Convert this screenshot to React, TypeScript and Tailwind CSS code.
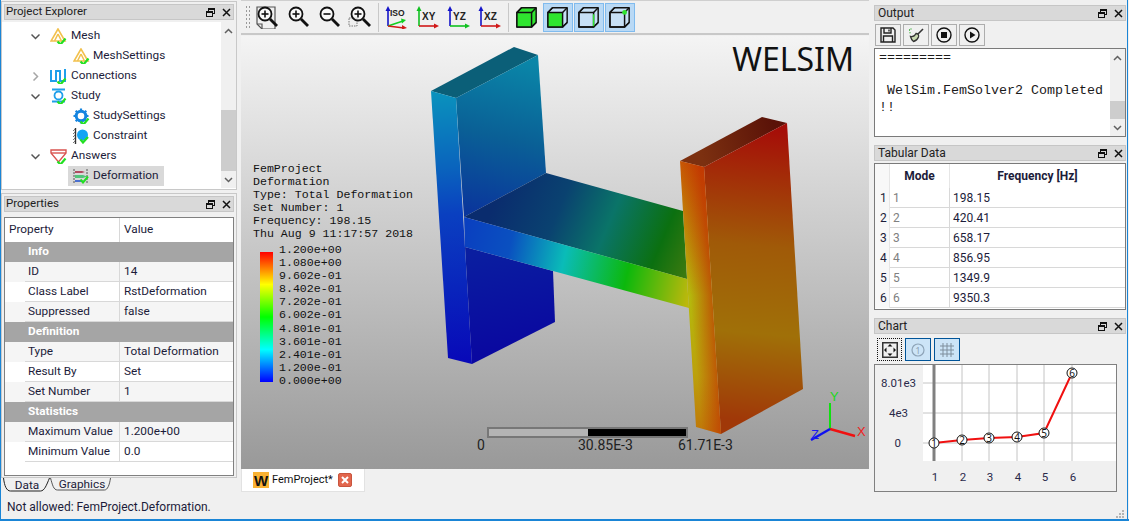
import React from "react";

const uiFont = "font-['Roboto','Noto_Sans',sans-serif]";

function FloatClose() {
  return (
    <div className="flex items-center gap-[7px] pr-[2px]">
      <svg width="9" height="9" viewBox="0 0 9 9" fill="none" stroke="#111" strokeWidth="1">
        <rect x="2.5" y="0.5" width="6" height="5" />
        <path d="M2.5 1.5h6" />
        <rect x="0.5" y="3.5" width="6" height="5" fill="#d9d9d9" />
        <path d="M0.5 4.5h6" />
      </svg>
      <svg width="9" height="9" viewBox="0 0 9 9" fill="none" stroke="#111" strokeWidth="1.5">
        <path d="M1 1l7 7M8 1l-7 7" />
      </svg>
    </div>
  );
}

function TitleBar({ text, right }: { text: string; right?: boolean }) {
  return (
    <div className={"h-[16px] shrink-0 bg-[#d9d9d9] border border-[#c6c6c6] flex items-center justify-between text-[#222] leading-none " + (right ? "pl-[3px] text-[12px]" : "pl-[1px] text-[11.5px]")}>
      <span>{text}</span>
      <FloatClose />
    </div>
  );
}

function Check() {
  return (
    <path d="M7.5 13.5l3 3 5-6" fill="none" stroke="#22e022" strokeWidth="2.2" />
  );
}

function MeshIcon() {
  return (
    <svg width="17" height="16" viewBox="0 0 17 16" fill="none" stroke="#f2c14e" strokeWidth="1.6">
      <path d="M8 1L1 13h14z" />
      <path d="M8 6l-3.5 7M8 6l3.5 7" />
      <Check />
    </svg>
  );
}

function ConnectionsIcon() {
  return (
    <svg width="17" height="16" viewBox="0 0 17 16" fill="none" stroke="#1f9fea" strokeWidth="2">
      <path d="M1 2v11h5V3h4v10h5V1" />
      <Check />
    </svg>
  );
}

function StudyIcon() {
  return (
    <svg width="17" height="16" viewBox="0 0 17 16" fill="none" stroke="#1f9fea" strokeWidth="1.8">
      <path d="M2 1.5h13M2 13.5h13" />
      <circle cx="8.5" cy="7.5" r="4" />
      <Check />
    </svg>
  );
}

function GearIcon() {
  return (
    <svg width="17" height="16" viewBox="0 0 17 16" fill="none">
      <circle cx="8" cy="8" r="4.8" stroke="#1585e0" strokeWidth="3" />
      <path d="M8 0.5v3M8 12.5v3M0.5 8h3M12.5 8h3M2.7 2.7l2 2M11.3 11.3l2 2M13.3 2.7l-2 2M4.7 11.3l-2 2" stroke="#1585e0" strokeWidth="2.2" />
      <Check />
    </svg>
  );
}

function ConstraintIcon() {
  return (
    <svg width="17" height="16" viewBox="0 0 17 16" fill="none">
      <path d="M2.5 0v16" stroke="#333" strokeWidth="1.4" />
      <path d="M0 3l2-2M0 6l2-2M0 9l2-2M0 12l2-2M0 15l2-2" stroke="#777" />
      <circle cx="9.5" cy="7" r="5.5" fill="#12a4f4" />
      <path d="M7.5 11.5l2.5 3 5-5.5" stroke="#22e022" strokeWidth="2.2" />
    </svg>
  );
}

function AnswersIcon() {
  return (
    <svg width="17" height="16" viewBox="0 0 17 16" fill="none" stroke="#d9534f" strokeWidth="1.4">
      <path d="M1 2h15v3l-7.5 9L1 5z" />
      <path d="M1 5h15" />
      <Check />
    </svg>
  );
}

function DeformationIcon() {
  return (
    <svg width="17" height="16" viewBox="0 0 17 16" fill="none">
      <path d="M1 1v14M14 1v14" stroke="#555" strokeDasharray="2 1" />
      <path d="M2 3h7l3 1-3 1H2z" fill="#b04a60" />
      <path d="M2 7h8l4 1.5L10 10H2z" fill="#52c47a" />
      <path d="M2 12h6l3 1-3 1H2z" fill="#4a6fd0" />
      <path d="M7.5 11.5l2.5 3 5-6" stroke="#22e022" strokeWidth="2" />
    </svg>
  );
}

function Chevron({ open }: { open: boolean }) {
  return (
    <svg width="9" height="9" viewBox="0 0 9 9" fill="none" strokeWidth="1.5" stroke={open ? "#555" : "#a6a6a6"}>
      {open ? <path d="M0.5 2.5l4 4 4-4" /> : <path d="M2.5 0.5l4 4-4 4" />}
    </svg>
  );
}

const treeRows = [
  { label: "Mesh", depth: 0, open: true, icon: <MeshIcon /> },
  { label: "MeshSettings", depth: 1, icon: <MeshIcon /> },
  { label: "Connections", depth: 0, open: false, icon: <ConnectionsIcon /> },
  { label: "Study", depth: 0, open: true, icon: <StudyIcon /> },
  { label: "StudySettings", depth: 1, icon: <GearIcon /> },
  { label: "Constraint", depth: 1, icon: <ConstraintIcon /> },
  { label: "Answers", depth: 0, open: true, icon: <AnswersIcon /> },
  { label: "Deformation", depth: 1, icon: <DeformationIcon />, selected: true },
];

function ScrollBar({ thumbTop, thumbH, h }: { thumbTop: number; thumbH: number; h: number }) {
  return (
    <div className="w-[15px] shrink-0 bg-[#f0f0f0] flex flex-col items-center" style={{ height: h }}>
      <div className="h-[17px] flex items-center justify-center shrink-0">
        <svg width="9" height="6" viewBox="0 0 9 6" fill="none" stroke="#606060" strokeWidth="1.5">
          <path d="M1 5l3.5-3.5L8 5" />
        </svg>
      </div>
      <div className="flex-1 w-full relative">
        <div className="absolute left-0 right-0 bg-[#cdcdcd]" style={{ top: thumbTop, height: thumbH }} />
      </div>
      <div className="h-[17px] flex items-center justify-center shrink-0">
        <svg width="9" height="6" viewBox="0 0 9 6" fill="none" stroke="#606060" strokeWidth="1.5">
          <path d="M1 1l3.5 3.5L8 1" />
        </svg>
      </div>
    </div>
  );
}

function ProjectExplorer() {
  return (
    <div className="h-[189px] border border-[#c8c8c8] px-[2px] pt-[2px] flex flex-col">
      <TitleBar text="Project Explorer" />
      <div className="mt-[2px] flex-1 bg-white -mx-[2px] flex min-h-0 overflow-hidden">
        <div className="flex-1 pt-[4px]">
          {treeRows.map((r) => (
            <div key={r.label} className="h-[20px] flex items-center text-[11.8px] text-[#1c1c3a]">
              {r.depth === 0 ? (
                <>
                  <div className="w-[48px] pl-[29px] flex items-center">
                    <Chevron open={!!r.open} />
                  </div>
                  <div className="w-[21px]">{r.icon}</div>
                  <span>{r.label}</span>
                </>
              ) : (
                <>
                  <div className={"ml-[66px] h-[20px] flex items-center pl-[5px] pr-[5px] " + (r.selected ? "bg-[#d9d9d9]" : "")}>
                    <div className="w-[20px]">{r.icon}</div>
                    <span>{r.label}</span>
                  </div>
                </>
              )}
            </div>
          ))}
        </div>
        <ScrollBar h={166} thumbTop={71} thumbH={61} />
      </div>
    </div>
  );
}

const propRows: { k: string; v?: string; cat?: boolean; alt?: boolean }[] = [
  { k: "Info", cat: true },
  { k: "ID", v: "14", alt: true },
  { k: "Class Label", v: "RstDeformation" },
  { k: "Suppressed", v: "false", alt: true },
  { k: "Definition", cat: true },
  { k: "Type", v: "Total Deformation", alt: true },
  { k: "Result By", v: "Set" },
  { k: "Set Number", v: "1", alt: true },
  { k: "Statistics", cat: true },
  { k: "Maximum Value", v: "1.200e+00", alt: true },
  { k: "Minimum Value", v: "0.0" },
];

function Properties() {
  return (
    <div className="mt-[3px] h-[285px] border border-[#c8c8c8] px-[2px] pt-[2px] flex flex-col">
      <TitleBar text="Properties" />
      <div className="mt-[5px] h-[259px] w-[230px] border border-[#808080] bg-white text-[11.8px] text-[#1c1c3a] overflow-hidden">
        <div className="h-[24px] flex items-center">
          <div className="w-[115px] h-full pl-[4px] flex items-center border-r border-[#d8d8d8]">Property</div>
          <div className="pl-[4px]">Value</div>
        </div>
        {propRows.map((r) =>
          r.cat ? (
            <div key={r.k} className="h-[20px] bg-[#a5a5a5] text-white font-bold pl-[23px] flex items-center">
              {r.k}
            </div>
          ) : (
            <div key={r.k} className={"h-[20px] flex " + (r.alt ? "bg-[#f5f5f5]" : "bg-white")}>
              <div className="w-[20px] shrink-0" />
              <div className="w-[95px] shrink-0 pl-[3px] border-b border-r border-[#d8d8d8] flex items-center whitespace-nowrap">{r.k}</div>
              <div className="flex-1 pl-[4px] border-b border-[#d8d8d8] flex items-center">{r.v}</div>
            </div>
          )
        )}
      </div>
    </div>
  );
}

function BottomTabs() {
  return (
    <div className="flex pl-[2px] text-[11.8px] text-[#1c1c3a] leading-none">
      <div className="relative w-[48px] h-[15px] flex items-center justify-center">
        <svg className="absolute inset-0" width="48" height="15" viewBox="0 0 48 15" fill="#f0f0f0" stroke="#222">
          <path d="M0.5 0c1 8 3 13 7 13h30c4 0 6-6 9-13" />
        </svg>
        <span className="relative">Data</span>
      </div>
      <div className="relative w-[64px] h-[15px] -ml-[1px] flex items-center justify-center">
        <svg className="absolute inset-0" width="64" height="15" viewBox="0 0 64 15" fill="#f0f0f0" stroke="#555">
          <path d="M0.5 0c2 7 3 12 7 12h47c3 0 5-5 6-12" />
        </svg>
        <span className="relative -mt-[2px]">Graphics</span>
      </div>
    </div>
  );
}

function Magnifier({ sign, children }: { sign: "+" | "-"; children?: React.ReactNode }) {
  return (
    <svg width="24" height="24" viewBox="0 0 24 24" fill="none" stroke="#111">
      {children}
      <circle cx="10" cy="9" r="6.5" strokeWidth="1.8" fill="#fff" fillOpacity="0.6" />
      <path d="M6.5 9h7" strokeWidth="1.6" />
      {sign === "+" && <path d="M10 5.5v7" strokeWidth="1.6" />}
      <path d="M15 14l7 7" strokeWidth="2.8" />
    </svg>
  );
}

function AxisIcon({ label, up, right, third }: { label: string; up: string; right: string; third?: string }) {
  return (
    <svg width="24" height="24" viewBox="0 0 24 24" fill="none" strokeWidth="1.6">
      <path d="M3 21V4" stroke={up} />
      <path d="M0.5 6L3 1l2.5 5z" fill={up} stroke="none" />
      {third ? (
        <>
          <path d="M3 21l15-5" stroke="#10d020" />
          <path d="M16 13.5l5 1.5-4 3.5z" fill="#10d020" stroke="none" />
          <path d="M3 21l16 2" stroke="#d01818" />
          <path d="M17 20l5 3-5 1.5z" fill="#d01818" stroke="none" />
        </>
      ) : (
        <>
          <path d="M3 21h16" stroke={right} />
          <path d="M18 18.5l5 2.5-5 2.5z" fill={right} stroke="none" />
        </>
      )}
      <text x={third ? 5 : 6} y={third ? 11 : 15} fontFamily="'Liberation Sans',sans-serif" fontWeight="bold" fontSize={third ? 8.5 : 10} fill="#222" stroke="none">
        {label}
      </text>
    </svg>
  );
}

function Cube({ variant }: { variant: "solid" | "front" | "right" | "corner" }) {
  return (
    <svg width="22" height="22" viewBox="0 0 24 24" fill="none" stroke="#111" strokeWidth="1.6" strokeLinejoin="round">
      <path d="M6 2h16v16l-5 5H1V7z" fill={variant === "solid" ? "#2fe52f" : "#dcebf8"} fillOpacity={variant === "solid" ? 1 : 0.4} />
      <rect x="1" y="7" width="16" height="16" fill={variant === "front" || variant === "solid" ? "#2fe52f" : "none"} />
      <path d="M1 7l5-5M17 7l5-5M17 23l5-5" />
      {variant === "right" && <path d="M17 9v13" stroke="#2fe52f" strokeWidth="1.6" />}
      {variant === "corner" && <circle cx="17" cy="7" r="2.6" fill="#2fe52f" stroke="none" />}
    </svg>
  );
}

function ToolBtn({ active, children }: { active?: boolean; children: React.ReactNode }) {
  return (
    <div className={"w-[30px] h-[29px] flex items-center justify-center shrink-0 border " + (active ? "bg-[#b9d9f5] border-[#80bbee]" : "border-transparent")}>
      {children}
    </div>
  );
}

function Toolbar() {
  return (
    <div className="h-[35px] shrink-0 border-t border-b-2 border-t-[#cfcfcf] border-b-[#c8c8c8] flex items-center pl-[4px] gap-[1px]">
      <div className="w-[5px] h-[24px] mr-[1px] bg-[radial-gradient(#9a9a9a_0.7px,transparent_0.9px)] bg-[length:3px_4px]" />
      <ToolBtn>
        <Magnifier sign="+">
          <path d="M2 2h18v22H7l-5-5z" stroke="#555" strokeWidth="1.2" />
          <path d="M2 19h5v5" stroke="#555" strokeWidth="1.2" />
        </Magnifier>
      </ToolBtn>
      <ToolBtn><Magnifier sign="+" /></ToolBtn>
      <ToolBtn><Magnifier sign="-" /></ToolBtn>
      <ToolBtn>
        <Magnifier sign="+">
          <rect x="1" y="13" width="8" height="8" stroke="#777" strokeDasharray="1.5 1" />
        </Magnifier>
      </ToolBtn>
      <div className="w-[1px] h-[29px] bg-[#c8c8c8] mx-[2px]" />
      <ToolBtn><AxisIcon label="ISO" up="#1414c8" right="" third="y" /></ToolBtn>
      <ToolBtn><AxisIcon label="XY" up="#10c020" right="#d01818" /></ToolBtn>
      <ToolBtn><AxisIcon label="YZ" up="#1414c8" right="#10c020" /></ToolBtn>
      <ToolBtn><AxisIcon label="XZ" up="#1414c8" right="#d01818" /></ToolBtn>
      <div className="w-[1px] h-[29px] bg-[#c8c8c8] mx-[2px]" />
      <ToolBtn><Cube variant="solid" /></ToolBtn>
      <ToolBtn active><Cube variant="front" /></ToolBtn>
      <ToolBtn active><Cube variant="right" /></ToolBtn>
      <ToolBtn active><Cube variant="corner" /></ToolBtn>
    </div>
  );
}

function Model() {
  return (
    <svg className="absolute inset-0" width="628" height="433" viewBox="241 36 628 433">
      <defs>
        <linearGradient id="lfStrip" gradientUnits="userSpaceOnUse" x1="440" y1="91" x2="460" y2="364">
          <stop offset="0" stopColor="#0a93bd" />
          <stop offset="0.28" stopColor="#0a64bd" />
          <stop offset="0.45" stopColor="#0a40c0" />
          <stop offset="1" stopColor="#0808b8" />
        </linearGradient>
        <linearGradient id="lfUp" gradientUnits="userSpaceOnUse" x1="520" y1="60" x2="485" y2="215">
          <stop offset="0" stopColor="#0a86a8" />
          <stop offset="0.5" stopColor="#0a6096" />
          <stop offset="1" stopColor="#0a369c" />
        </linearGradient>
        <linearGradient id="lfDown" gradientUnits="userSpaceOnUse" x1="490" y1="250" x2="510" y2="350">
          <stop offset="0" stopColor="#0a1ea0" />
          <stop offset="1" stopColor="#0a08a0" />
        </linearGradient>
        <linearGradient id="webTop" gradientUnits="userSpaceOnUse" x1="500" y1="190" x2="690" y2="270">
          <stop offset="0" stopColor="#0a2c6e" />
          <stop offset="0.3" stopColor="#0a4270" />
          <stop offset="0.55" stopColor="#0a7468" />
          <stop offset="0.82" stopColor="#0b7010" />
          <stop offset="1" stopColor="#3e7a10" />
        </linearGradient>
        <linearGradient id="webFront" gradientUnits="userSpaceOnUse" x1="464" y1="240" x2="690" y2="290">
          <stop offset="0" stopColor="#0a40c0" />
          <stop offset="0.2" stopColor="#0a50c0" />
          <stop offset="0.44" stopColor="#0abcb8" />
          <stop offset="0.72" stopColor="#0cb80c" />
          <stop offset="1" stopColor="#bcb80c" />
        </linearGradient>
        <linearGradient id="rfStrip" gradientUnits="userSpaceOnUse" x1="690" y1="161" x2="700" y2="430">
          <stop offset="0" stopColor="#c85c04" />
          <stop offset="0.5" stopColor="#b4ba0c" />
          <stop offset="0.8" stopColor="#bca00c" />
          <stop offset="1" stopColor="#c07808" />
        </linearGradient>
        <linearGradient id="rfShade" gradientUnits="userSpaceOnUse" x1="690" y1="300" x2="712" y2="298">
          <stop offset="0" stopColor="#c02000" stopOpacity="0" />
          <stop offset="1" stopColor="#c02000" stopOpacity="0.6" />
        </linearGradient>
        <linearGradient id="rfFace" gradientUnits="userSpaceOnUse" x1="770" y1="130" x2="745" y2="420">
          <stop offset="0" stopColor="#a50e08" />
          <stop offset="0.4" stopColor="#a05a08" />
          <stop offset="0.7" stopColor="#a07008" />
          <stop offset="1" stopColor="#a03808" />
        </linearGradient>
        <linearGradient id="rfTop" gradientUnits="userSpaceOnUse" x1="700" y1="150" x2="775" y2="130">
          <stop offset="0" stopColor="#7c3010" />
          <stop offset="1" stopColor="#5a1208" />
        </linearGradient>
      </defs>
      <polygon points="431,91 514,47 538,55 456,98" fill="#0b5f78" />
      <polygon points="456,98 538,55 546,173 464,217" fill="url(#lfUp)" />
      <polygon points="465,247 553,271 555,322 472,364" fill="url(#lfDown)" />
      <polygon points="464,217 546,173 683,211 687,279" fill="url(#webTop)" />
      <polygon points="464,217 687,279 689,308 465,247" fill="url(#webFront)" />
      <polygon points="431,91 456,98 472,364 448,358" fill="url(#lfStrip)" />
      <polygon points="680,161 762,117 787,123 704,167" fill="url(#rfTop)" />
      <polygon points="704,167 787,123 803,389 721,434" fill="url(#rfFace)" />
      <polygon points="680,161 704,167 721,434 696,427" fill="url(#rfStrip)" />
      <polygon points="680,161 704,167 721,434 696,427" fill="url(#rfShade)" />
      <path d="M830 429V403" stroke="#10e010" strokeWidth="2" />
      <path d="M830 429l25 7" stroke="#f01010" strokeWidth="2.4" />
      <path d="M830 429l-19 11" stroke="#1010f0" strokeWidth="2.4" />
      <g fontFamily="'Liberation Sans',sans-serif" fontSize="13">
        <text x="830" y="401" fill="#20d820">Y</text>
        <text x="857" y="436" fill="#f02020">X</text>
        <text x="811" y="439" fill="#1818f0">Z</text>
      </g>
    </svg>
  );
}

const legend = ["1.200e+00", "1.080e+00", "9.602e-01", "8.402e-01", "7.202e-01", "6.002e-01", "4.801e-01", "3.601e-01", "2.401e-01", "1.200e-01", "0.000e+00"];

function Viewport() {
  return (
    <div className="relative h-[433px] shrink-0 overflow-hidden bg-[linear-gradient(to_bottom,#f4f4f4,#999999)]">
      <Model />
      <div className="absolute right-[15px] top-[3px] font-['Noto_Sans',sans-serif] text-[32px] leading-[40px] text-[#111]">WELSIM</div>
      <div className="absolute left-[12px] top-[126px] font-['Liberation_Mono',monospace] text-[11.6px] leading-[13px] text-[#111] whitespace-pre">
        {"FemProject\nDeformation\nType: Total Deformation\nSet Number: 1\nFrequency: 198.15\nThu Aug 9 11:17:57 2018"}
      </div>
      <div className="absolute left-[19px] top-[216px] w-[13px] h-[130px] bg-[linear-gradient(to_bottom,#ff0000,#ffff00_25%,#00ff00_50%,#00ffff_75%,#0000ff)]" />
      <div className="absolute left-[38px] top-[207px] font-['Liberation_Mono',monospace] text-[11.6px] leading-[13.1px] text-[#111] whitespace-pre">
        {legend.join("\n")}
      </div>
      <div className="absolute left-[246px] top-[391px] w-[201px] h-[11px] flex border-2 border-[#777]">
        <div className="w-[99px] bg-[#b4b4b4]" />
        <div className="flex-1 bg-black" />
      </div>
      <span className="absolute left-[236px] top-[400px] text-[14px] leading-[18px] text-[#222]">0</span>
      <span className="absolute left-[337px] top-[400px] text-[14px] leading-[18px] text-[#222]">30.85E-3</span>
      <span className="absolute left-[437px] top-[400px] text-[14px] leading-[18px] text-[#222]">61.71E-3</span>
    </div>
  );
}

function DocTab() {
  return (
    <div className="w-[124px] h-[23px] bg-white border border-t-0 border-[#e2e2e2] flex items-center pl-[11px] text-[11px] text-[#111]">
      <div className="w-[16px] h-[16px] bg-[#f9b233] flex items-center justify-center font-bold text-[15px] leading-none font-['Liberation_Sans',sans-serif]">W</div>
      <span className="ml-[3px]">FemProject*</span>
      <div className="ml-[5px] w-[14px] h-[14px] rounded-[2px] bg-[#e2664d] border border-[#c9553e] flex items-center justify-center">
        <svg width="8" height="8" viewBox="0 0 8 8" stroke="#fff" strokeWidth="2">
          <path d="M1 1l6 6M7 1l-6 6" />
        </svg>
      </div>
    </div>
  );
}

function SmallBtn({ children }: { children: React.ReactNode }) {
  return <div className="w-[26px] h-[22px] border border-[#adadad] flex items-center justify-center">{children}</div>;
}

function Output() {
  return (
    <div className="flex flex-col">
      <TitleBar text="Output" right />
      <div className="mt-[3px] flex gap-[2px] pl-[1px]">
        <SmallBtn>
          <svg width="16" height="16" viewBox="0 0 16 16" fill="none" stroke="#222" strokeWidth="1.4">
            <path d="M1 1h12l2 2v12H1z" />
            <path d="M4 1v5h7V1M9 2.5v2" />
            <path d="M3.5 15V9h9v6" />
          </svg>
        </SmallBtn>
        <SmallBtn>
          <svg width="16" height="16" viewBox="0 0 16 16" fill="none" stroke="#333" strokeWidth="1.3">
            <path d="M15 2L9 8" strokeWidth="1.6" />
            <path d="M8 6.5c2 0 3 1.5 2.5 3.5-1 2.5-3 4-5 4.500-1.500-1-2.500-3-3-5 2 .5 4 0 5.500-3z" fill="#c8d8b0" />
            <path d="M1 3h1M3 1.500v1M1.500 6l1-.5" stroke="#3a3" />
          </svg>
        </SmallBtn>
        <SmallBtn>
          <svg width="16" height="16" viewBox="0 0 16 16" fill="none" stroke="#111" strokeWidth="1.4">
            <circle cx="8" cy="8" r="7" />
            <rect x="5" y="5" width="6" height="6" fill="#111" stroke="none" />
          </svg>
        </SmallBtn>
        <SmallBtn>
          <svg width="16" height="16" viewBox="0 0 16 16" fill="none" stroke="#111" strokeWidth="1.4">
            <circle cx="8" cy="8" r="7" />
            <path d="M6 4.500l5.500 3.500L6 11.500z" fill="#111" stroke="none" />
          </svg>
        </SmallBtn>
      </div>
      <div className="mt-[2px] h-[89px] border border-[#7a7a7a] bg-white flex overflow-hidden">
        <div className="flex-1 pl-[4px] pt-[1px] font-['Liberation_Mono',monospace] text-[13.33px] leading-[16.5px] text-[#1a1a1a] whitespace-pre">
          {"=========\n\n WelSim.FemSolver2 Completed\n!!"}
        </div>
        <ScrollBar h={87} thumbTop={35} thumbH={18} />
      </div>
    </div>
  );
}

const freq = [
  ["1", "198.15"],
  ["2", "420.41"],
  ["3", "658.17"],
  ["4", "856.95"],
  ["5", "1349.9"],
  ["6", "9350.3"],
];

function Tabular() {
  return (
    <div className="mt-[8px] flex flex-col">
      <TitleBar text="Tabular Data" right />
      <div className="mt-[2px] h-[147px] border border-[#7a7a7a] bg-white text-[12px] text-[#1c1c3a] overflow-hidden">
        <div className="h-[24px] flex font-bold items-center">
          <div className="w-[15px] h-full border-r border-[#e6e6e6] bg-[#f8f8f8]" />
          <div className="w-[60px] h-full border-r border-[#e6e6e6] flex items-center justify-center">Mode</div>
          <div className="flex-1 text-center">Frequency [Hz]</div>
        </div>
        {freq.map(([m, f]) => (
          <div key={m} className="h-[20px] flex items-center">
            <div className="w-[15px] h-full border-r border-[#e6e6e6] bg-[#f8f8f8] flex items-center pl-[5px]">{m}</div>
            <div className="w-[60px] h-full border-r border-b border-[#d8d8d8] flex items-center pl-[3px] text-[#808080]">{m}</div>
            <div className="flex-1 h-full border-b border-[#d8d8d8] flex items-center pl-[3px]">{f}</div>
          </div>
        ))}
      </div>
    </div>
  );
}

const pts = [
  [934, 443],
  [962, 440],
  [989, 438],
  [1017, 437],
  [1044, 433],
  [1072, 373],
];

function Plot() {
  return (
    <svg width="241" height="126" viewBox="875 365 241 126">
      <rect x="875" y="365" width="241" height="127" fill="#f0f0f0" />
      <rect x="923" y="365" width="193" height="96" fill="#fff" />
      <g stroke="#c4c4c4">
        {[962, 989, 1017, 1044, 1072].map((x) => (
          <path key={x} d={`M${x} 365V461`} />
        ))}
        {[383, 413, 443].map((y) => (
          <path key={y} d={`M923 ${y}H1116`} />
        ))}
      </g>
      <path d="M934 365V461" stroke="#808080" strokeWidth="3" />
      <polyline points={pts.map((p) => p.join(",")).join(" ")} fill="none" stroke="#f01010" strokeWidth="2" />
      <g fontFamily="'Noto Sans',sans-serif" fontSize="10" textAnchor="middle" fill="#111">
        {pts.map((p, i) => (
          <g key={i}>
            <circle cx={p[0]} cy={p[1]} r="5" fill="#fff" stroke="#111" />
            <text x={p[0]} y={p[1] + 3.5}>{i + 1}</text>
          </g>
        ))}
      </g>
      <g fontFamily="'Roboto',sans-serif" fontSize="11.5" fill="#2a2a4a">
        <g textAnchor="end">
          <text x="916" y="387">8.01e3</text>
          <text x="908" y="417">4e3</text>
          <text x="901" y="447">0</text>
        </g>
        <g textAnchor="middle">
          {pts.map((p, i) => (
            <text key={i} x={p[0] + 1} y="481">{i + 1}</text>
          ))}
        </g>
      </g>
    </svg>
  );
}

function Chart() {
  return (
    <div className="mt-[8px] flex flex-col relative">
      <TitleBar text="Chart" right />
      <div className="mt-[4px] pl-[3px] flex gap-[3px]">
        <div className="w-[25px] h-[23px] border border-dotted border-[#111] flex items-center justify-center">
          <svg width="16" height="16" viewBox="0 0 16 16">
            <rect x="0.75" y="0.75" width="14.500" height="14.500" fill="none" stroke="#333" strokeWidth="1.5" />
            <path d="M8 2l2.500 2.500h-5zM8 14l2.500-2.500h-5zM2 8l2.500-2.500v5zM14 8l-2.500-2.500v5z" fill="#111" />
          </svg>
        </div>
        <div className="w-[26px] h-[23px] border border-[#005499] bg-[#cce4f7] flex items-center justify-center">
          <svg width="14" height="14" viewBox="0 0 14 14">
            <circle cx="7" cy="7" r="6" fill="none" stroke="#8ea4b8" strokeWidth="1.2" />
            <text x="7" y="10.500" textAnchor="middle" fontSize="9.500" fill="#8ea4b8" fontFamily="'Noto Sans',sans-serif">1</text>
          </svg>
        </div>
        <div className="w-[26px] h-[23px] border border-[#005499] bg-[#cce4f7] flex items-center justify-center">
          <svg width="16" height="16" viewBox="0 0 16 16" stroke="#7f8e9c">
            <path d="M4 1v14M8 1v14M12 1v14M1 4h14M1 8h14M1 12h14" />
          </svg>
        </div>
      </div>
      <div className="mt-[3px] w-[243px] h-[128px] border border-[#808080] overflow-hidden">
        <Plot />
      </div>
      <svg className="absolute right-[2px] bottom-[-26px]" width="8" height="8" viewBox="0 0 8 8" fill="#b4b4b4">
        <rect x="6" y="0" width="2" height="2" />
        <rect x="3" y="3" width="2" height="2" />
        <rect x="6" y="3" width="2" height="2" />
        <rect x="0" y="6" width="2" height="2" />
        <rect x="3" y="6" width="2" height="2" />
        <rect x="6" y="6" width="2" height="2" />
      </svg>
    </div>
  );
}

export default function App() {
  return (
    <div className={"w-[1129px] h-[521px] overflow-hidden bg-[#f0f0f0] border-l border-b-2 border-[#1a85d6] flex " + uiFont}>
      <div className="w-[236px] shrink-0 pt-[1px] flex flex-col">
        <ProjectExplorer />
        <Properties />
        <BottomTabs />
        <div className="mt-[6px] pl-[6px] text-[12px] leading-[16px] text-[#1c1c3a] whitespace-nowrap">Not allowed: FemProject.Deformation.</div>
      </div>
      <div className="w-[628px] shrink-0 ml-[4px] flex flex-col">
        <Toolbar />
        <div className="h-[1px] shrink-0" />
        <Viewport />
        <DocTab />
      </div>
      <div className="w-[252px] shrink-0 ml-[5px] pt-[5px] flex flex-col">
        <Output />
        <Tabular />
        <Chart />
      </div>
      <div className="w-[1px] ml-[1px] h-full bg-[#1a85d6]" />
    </div>
  );
}
